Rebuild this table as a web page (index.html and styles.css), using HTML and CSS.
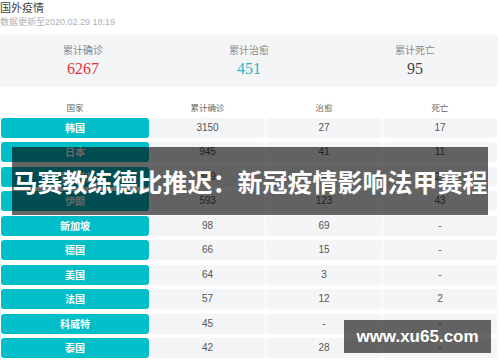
FILE: index.html
```html
<!DOCTYPE html>
<html lang="zh">
<head>
<meta charset="utf-8">
<title>国外疫情</title>
<link rel="stylesheet" href="styles.css">
</head>
<body>
<div class="page">
  <div class="title">国外疫情</div>
  <div class="sub">数据更新至<span class="num">2020.02.29 18:19</span></div>
  <div class="stats">
    <div class="stat"><div class="label">累计确诊</div><div class="value red">6267</div></div>
    <div class="stat"><div class="label">累计治愈</div><div class="value teal">451</div></div>
    <div class="stat"><div class="label">累计死亡</div><div class="value dark">95</div></div>
  </div>
  <div class="table">
    <div class="row head"><div>国家</div><div>累计确诊</div><div>治愈</div><div>死亡</div></div>
    <div class="rows">
      <div class="row"><div class="c">韩国</div><div class="n">3150</div><div class="n">27</div><div class="n">17</div></div>
      <div class="row"><div class="c">日本</div><div class="n">945</div><div class="n">41</div><div class="n">11</div></div>
      <div class="row"><div class="c">意大利</div><div class="n">889</div><div class="n">46</div><div class="n">21</div></div>
      <div class="row"><div class="c">伊朗</div><div class="n">593</div><div class="n">123</div><div class="n">43</div></div>
      <div class="row"><div class="c">新加坡</div><div class="n">98</div><div class="n">69</div><div class="n">-</div></div>
      <div class="row"><div class="c">德国</div><div class="n">66</div><div class="n">15</div><div class="n">-</div></div>
      <div class="row"><div class="c">美国</div><div class="n">64</div><div class="n">3</div><div class="n">-</div></div>
      <div class="row"><div class="c">法国</div><div class="n">57</div><div class="n">12</div><div class="n">2</div></div>
      <div class="row"><div class="c">科威特</div><div class="n">45</div><div class="n">-</div><div class="n">-</div></div>
      <div class="row"><div class="c">泰国</div><div class="n">42</div><div class="n">28</div><div class="n">-</div></div>
    </div>
  </div>
  <div class="banner">马赛教练德比推迟：新冠疫情影响法甲赛程</div>
  <div class="mark">www.xu65.com</div>
</div>
</body>
</html>
```
FILE: styles.css
```css
html, body { margin: 0; padding: 0; background: #fff; }
body { font-family: "Noto Sans CJK SC", "Noto Sans", sans-serif; }
.page { position: relative; width: 500px; height: 362px; overflow: hidden; }
.title { font-size: 11px; line-height: 15px; color: #444; }
.sub { font-size: 9px; line-height: 14px; color: #b0b0b0; }
.sub .num { font-family: "Liberation Sans", Arial, sans-serif; }
.stats {
  margin-top: 6px; width: 498px; height: 52px; box-sizing: border-box;
  padding-top: 8.5px; background: #f4f5f7; border-radius: 4px;
  display: grid; grid-template-columns: repeat(3, 1fr);
}
.stat { text-align: center; }
.label { font-family: "Liberation Serif", "Noto Sans CJK SC", serif; font-size: 10px; line-height: 13px; color: #888; }
.value { font-family: "Liberation Serif", serif; font-size: 16px; line-height: 20px; margin-top: 2.5px; }
.red { color: #e8343c; }
.teal { color: #2ab5c4; }
.dark { color: #444; }
.table { margin-left: 1px; width: 496px; margin-top: 14px; }
.row {
  display: grid; grid-template-columns: 148px 115px 116px 114px; column-gap: 1px;
  height: 20px; line-height: 20px; text-align: center; font-size: 10px;
}
.row.head { height: 14px; line-height: 14px; margin-bottom: 3px; color: #666; font-size: 8.5px; font-family: "Liberation Serif", "Noto Sans CJK SC", serif; }
.rows { display: flex; flex-direction: column; gap: 4.45px; }
.c { background: #00bfc9; color: #fff; font-weight: bold; border-radius: 3px; font-size: 10px; }
.n { background: #f4f5f7; color: #555; border-radius: 3px; font-family: "Liberation Sans", Arial, sans-serif; }
.banner {
  position: absolute; left: 12px; top: 147px; width: 476px; height: 68px;
  background: rgba(0, 0, 0, 0.6); color: #fff; font-weight: bold;
  font-size: 25px; line-height: 68px; text-align: center; white-space: nowrap;
}
.mark {
  position: absolute; left: 344px; top: 320px; width: 147px; height: 33px;
  background: rgba(0, 0, 0, 0.6); color: #fff; font-weight: bold;
  font-family: "Liberation Sans", Arial, sans-serif; font-size: 17px;
  line-height: 33px; text-align: center;
}
```
